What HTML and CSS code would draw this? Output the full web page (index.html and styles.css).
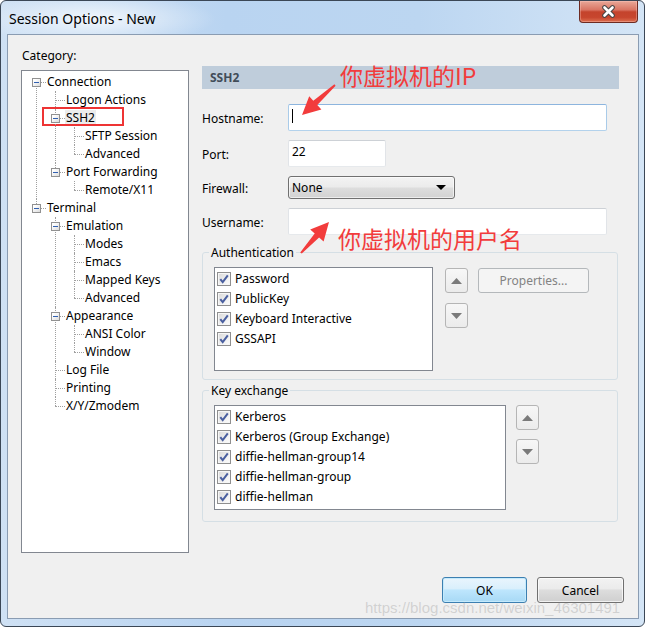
FILE: index.html
```html
<!DOCTYPE html>
<html>
<head>
<meta charset="utf-8">
<title>Session Options - New</title>
<link rel="stylesheet" href="styles.css">
</head>
<body>
<div class="window">
  <div class="titlebar">
    <span class="title">Session Options - New</span>
    <div class="close">
      <svg width="15" height="13" viewBox="0 0 15 13"><path d="M3.5 2.5 L11.5 10.5 M11.5 2.5 L3.5 10.5" stroke="#454545" stroke-width="4.6" stroke-linecap="round"/><path d="M3.5 2.5 L11.5 10.5 M11.5 2.5 L3.5 10.5" stroke="#ffffff" stroke-width="2.6" stroke-linecap="round"/></svg>
    </div>
  </div>
  <div class="client">
    <div class="main">
      <div class="left">
        <div class="cat-label">Category:</div>
        <div class="tree">
          <ul class="tree-root">
            <li><div class="row"><span class="tog"></span><span class="lbl">Connection</span></div>
              <ul>
                <li><div class="row"><span class="leaf"></span><span class="lbl">Logon Actions</span></div></li>
                <li><div class="row"><span class="tog"></span><span class="lbl sel">SSH2</span><span class="mark"></span></div>
                  <ul>
                    <li><div class="row"><span class="leaf"></span><span class="lbl">SFTP Session</span></div></li>
                    <li><div class="row"><span class="leaf"></span><span class="lbl">Advanced</span></div></li>
                  </ul>
                </li>
                <li><div class="row"><span class="tog"></span><span class="lbl">Port Forwarding</span></div>
                  <ul>
                    <li><div class="row"><span class="leaf"></span><span class="lbl">Remote/X11</span></div></li>
                  </ul>
                </li>
              </ul>
            </li>
            <li><div class="row"><span class="tog"></span><span class="lbl">Terminal</span></div>
              <ul>
                <li><div class="row"><span class="tog"></span><span class="lbl">Emulation</span></div>
                  <ul>
                    <li><div class="row"><span class="leaf"></span><span class="lbl">Modes</span></div></li>
                    <li><div class="row"><span class="leaf"></span><span class="lbl">Emacs</span></div></li>
                    <li><div class="row"><span class="leaf"></span><span class="lbl">Mapped Keys</span></div></li>
                    <li><div class="row"><span class="leaf"></span><span class="lbl">Advanced</span></div></li>
                  </ul>
                </li>
                <li><div class="row"><span class="tog"></span><span class="lbl">Appearance</span></div>
                  <ul>
                    <li><div class="row"><span class="leaf"></span><span class="lbl">ANSI Color</span></div></li>
                    <li><div class="row"><span class="leaf"></span><span class="lbl">Window</span></div></li>
                  </ul>
                </li>
                <li><div class="row"><span class="leaf"></span><span class="lbl">Log File</span></div></li>
                <li><div class="row"><span class="leaf"></span><span class="lbl">Printing</span></div></li>
                <li><div class="row"><span class="leaf"></span><span class="lbl">X/Y/Zmodem</span></div></li>
              </ul>
            </li>
          </ul>
        </div>
      </div>
      <div class="right">
        <div class="header">SSH2</div>
        <div class="form">
          <span class="flabel">Hostname:</span>
          <div class="tb tb-wide focus"><span class="caret"></span></div>
          <span class="flabel">Port:</span>
          <div class="tb tb-port">22</div>
          <span class="flabel">Firewall:</span>
          <div class="select"><span>None</span><svg width="10" height="5" viewBox="0 0 10 5"><polygon points="0,0 10,0 5,5" fill="#000"/></svg></div>
          <span class="flabel">Username:</span>
          <div class="tb tb-wide"></div>
        </div>
        <fieldset class="group group-auth">
          <legend>Authentication</legend>
          <div class="group-body">
            <div class="list list-auth">
              <div class="item"><span class="chk"><svg width="12" height="12" viewBox="0 0 12 12"><path d="M2.3 6.2 L4.7 9.2 L9.8 2.4" fill="none" stroke="#4a5f9f" stroke-width="2"/></svg></span>Password</div>
              <div class="item"><span class="chk"><svg width="12" height="12" viewBox="0 0 12 12"><path d="M2.3 6.2 L4.7 9.2 L9.8 2.4" fill="none" stroke="#4a5f9f" stroke-width="2"/></svg></span>PublicKey</div>
              <div class="item"><span class="chk"><svg width="12" height="12" viewBox="0 0 12 12"><path d="M2.3 6.2 L4.7 9.2 L9.8 2.4" fill="none" stroke="#4a5f9f" stroke-width="2"/></svg></span>Keyboard Interactive</div>
              <div class="item"><span class="chk"><svg width="12" height="12" viewBox="0 0 12 12"><path d="M2.3 6.2 L4.7 9.2 L9.8 2.4" fill="none" stroke="#4a5f9f" stroke-width="2"/></svg></span>GSSAPI</div>
            </div>
            <div class="arrow-col">
              <div class="arr"><svg width="11" height="6" viewBox="0 0 11 6"><polygon points="0,6 5.5,0 11,6" fill="#7a7a7a"/></svg></div>
              <div class="arr"><svg width="11" height="6" viewBox="0 0 11 6"><polygon points="0,0 11,0 5.5,6" fill="#7a7a7a"/></svg></div>
            </div>
            <div class="btn disabled props">Properties...</div>
          </div>
        </fieldset>
        <fieldset class="group group-kex">
          <legend>Key exchange</legend>
          <div class="group-body">
            <div class="list list-kex">
              <div class="item"><span class="chk"><svg width="12" height="12" viewBox="0 0 12 12"><path d="M2.3 6.2 L4.7 9.2 L9.8 2.4" fill="none" stroke="#4a5f9f" stroke-width="2"/></svg></span>Kerberos</div>
              <div class="item"><span class="chk"><svg width="12" height="12" viewBox="0 0 12 12"><path d="M2.3 6.2 L4.7 9.2 L9.8 2.4" fill="none" stroke="#4a5f9f" stroke-width="2"/></svg></span>Kerberos (Group Exchange)</div>
              <div class="item"><span class="chk"><svg width="12" height="12" viewBox="0 0 12 12"><path d="M2.3 6.2 L4.7 9.2 L9.8 2.4" fill="none" stroke="#4a5f9f" stroke-width="2"/></svg></span>diffie-hellman-group14</div>
              <div class="item"><span class="chk"><svg width="12" height="12" viewBox="0 0 12 12"><path d="M2.3 6.2 L4.7 9.2 L9.8 2.4" fill="none" stroke="#4a5f9f" stroke-width="2"/></svg></span>diffie-hellman-group</div>
              <div class="item"><span class="chk"><svg width="12" height="12" viewBox="0 0 12 12"><path d="M2.3 6.2 L4.7 9.2 L9.8 2.4" fill="none" stroke="#4a5f9f" stroke-width="2"/></svg></span>diffie-hellman</div>
            </div>
            <div class="arrow-col kex-arrows">
              <div class="arr"><svg width="11" height="6" viewBox="0 0 11 6"><polygon points="0,6 5.5,0 11,6" fill="#7a7a7a"/></svg></div>
              <div class="arr"><svg width="11" height="6" viewBox="0 0 11 6"><polygon points="0,0 11,0 5.5,6" fill="#7a7a7a"/></svg></div>
            </div>
          </div>
        </fieldset>
      </div>
    </div>
    <div class="footer">
      <div class="btn ok">OK</div>
      <div class="btn cancel">Cancel</div>
    </div>
  </div>
  <div class="watermark">https://blog.csdn.net/weixin_46301491</div>
  <div class="note note-ip">你虚拟机的IP</div>
  <div class="note note-user">你虚拟机的用户名</div>
  <svg class="arrows" width="645" height="627" viewBox="0 0 645 627">
    <polygon points="335.6,85.8 317.3,105.1 321.4,109.6 302,115 309.2,96.2 313.3,100.7 334.4,84.3" fill="#f23c3c"/>
    <polygon points="301.8,253.6 319.1,237.4 323.6,241.4 329,222 310.2,229.4 314.7,233.4 300.2,252.4" fill="#f23c3c"/>
  </svg>
</div>
</body>
</html>
```
FILE: styles.css
```css
body {
  margin: 0;
  font-family: "Noto Sans", "Liberation Sans", sans-serif;
  font-size: 12px;
  line-height: 16px;
  color: #000;
  background: #fff;
}

.window {
  position: relative;
  width: 645px;
  height: 627px;
  box-sizing: border-box;
  border: 1px solid #3b4756;
  border-radius: 6px;
  padding: 0 5px 7px 6px;
  display: flex;
  flex-direction: column;
  overflow: hidden;
  background:
    radial-gradient(ellipse 120px 26px at 95px 18px, rgba(255,255,255,0.75), rgba(255,255,255,0)),
    linear-gradient(90deg, #cfe1f4 0%, #b9d4f1 35%, #bcd6f1 65%, #d4e5f6 100%);
}

.titlebar {
  height: 33px;
  display: flex;
  align-items: center;
  justify-content: space-between;
  flex-shrink: 0;
}

.title {
  font-size: 14px;
  margin-left: 2px;
  margin-top: 3px;
}

.close {
  align-self: flex-start;
  margin-right: 1px;
  width: 59px;
  height: 22px;
  box-sizing: border-box;
  border: 1px solid #6d2b22;
  border-top: none;
  border-radius: 0 0 4px 4px;
  background: linear-gradient(#e9a898 0%, #d97563 42%, #c4432c 52%, #c7462e 78%, #dc6f50 100%);
  box-shadow: inset 0 0 0 1px rgba(255, 210, 200, 0.35);
  display: flex;
  align-items: center;
  justify-content: center;
}

.client {
  height: 585px;
  box-sizing: border-box;
  border: 1px solid #8a9cb2;
  background: #f0f0f0;
  padding: 13px 0 0 13px;
  display: flex;
  flex-direction: column;
}

.main {
  display: flex;
  gap: 13px;
}

.left {
  width: 168px;
}

.cat-label {
  padding-left: 1px;
  margin-bottom: 6px;
}

/* tree */
.tree {
  width: 168px;
  height: 483px;
  box-sizing: border-box;
  border: 1px solid #828790;
  background: #fff;
  padding-top: 2px;
}

.tree ul {
  list-style: none;
  margin: 0;
  padding: 0;
}

.tree .tree-root {
  padding-left: 10px;
}

.tree li {
  position: relative;
  padding-left: 14px;
}

.tree li ul {
  margin-left: 5px;
}

.tree li::before {
  content: "";
  position: absolute;
  left: 4px;
  top: 9px;
  width: 10px;
  border-top: 1px dotted #a0a0a0;
}

.tree li::after {
  content: "";
  position: absolute;
  left: 4px;
  top: 0;
  bottom: 0;
  border-left: 1px dotted #a0a0a0;
}

.tree li:last-child::after {
  bottom: auto;
  height: 9px;
}

.tree .tree-root > li:first-child::after {
  top: 9px;
}

.row {
  position: relative;
  display: flex;
  align-items: center;
  height: 18px;
  margin-left: -14px;
}

.tog {
  position: relative;
  z-index: 1;
  width: 9px;
  height: 9px;
  box-sizing: border-box;
  border: 1px solid #919191;
  background: linear-gradient(135deg, #ffffff 20%, #dcdcdc 100%);
  margin-right: 5px;
  display: flex;
  align-items: center;
  justify-content: center;
}

.tog::after {
  content: "";
  width: 5px;
  height: 1px;
  background: #3160b0;
}

.leaf {
  width: 9px;
  margin-right: 5px;
}

.lbl {
  padding: 0 1px;
  line-height: 16px;
  white-space: nowrap;
}

.lbl.sel {
  background: #ececec;
}

.mark {
  position: absolute;
  left: -9px;
  top: -2px;
  width: 82px;
  height: 19px;
  box-sizing: border-box;
  border: 2px solid #ee3434;
}

/* right */
.right {
  width: 417px;
  margin-top: 18px;
}

.header {
  height: 23px;
  line-height: 23px;
  background: #bfcddb;
  padding-left: 8px;
  font-weight: bold;
  color: #414c58;
}

.form {
  display: grid;
  grid-template-columns: 86px auto;
  row-gap: 9px;
  align-items: center;
  justify-items: start;
  margin-top: 15px;
}

.flabel {
  padding-top: 2px;
}

.tb {
  box-sizing: border-box;
  height: 27px;
  border: 1px solid;
  border-color: #cdd1d6 #e1e4e8 #e6e9ec #e1e4e8;
  border-radius: 2px;
  background: #fff;
  padding: 3px 0 0 3px;
}

.tb-wide {
  width: 319px;
}

.tb-port {
  width: 98px;
}

.tb.focus {
  border-color: #8db5de #a9cbe9 #b3d2ec #a9cbe9;
}

.caret {
  display: block;
  width: 1px;
  height: 14px;
  background: #000;
  margin-top: 1px;
}

.select {
  box-sizing: border-box;
  width: 167px;
  height: 23px;
  border: 1px solid #707070;
  border-radius: 3px;
  background: linear-gradient(#f3f3f3 0%, #ebebeb 48%, #dddddd 52%, #d2d2d2 100%);
  box-shadow: inset 0 0 0 1px rgba(255, 255, 255, 0.6);
  display: flex;
  align-items: center;
  justify-content: space-between;
  padding: 0 8px 0 3px;
}

.group {
  box-sizing: border-box;
  width: 416px;
  min-width: 0;
  margin: 9px 0 0;
  padding: 0 8px 8px 6px;
  border: 1px solid #d5dfe5;
  border-radius: 3px;
}

.group legend {
  padding: 1px 2px 0;
  line-height: 16px;
}

.group-kex {
  margin-top: 2px;
  padding-bottom: 11px;
}

.group-body {
  display: flex;
  align-items: flex-start;
  margin-top: 6px;
  padding-left: 5px;
}

.list {
  box-sizing: border-box;
  border: 1px solid #828790;
  background: #fff;
  padding: 1px 0 0 2px;
}

.list-auth {
  width: 219px;
  height: 104px;
}

.list-kex {
  width: 292px;
  height: 105px;
}

.item {
  display: flex;
  align-items: center;
  gap: 4px;
  height: 20px;
  white-space: nowrap;
}

.chk {
  width: 14px;
  height: 14px;
  box-sizing: border-box;
  border: 1px solid #8f8f8f;
  background: linear-gradient(135deg, #d8d8d8 0%, #f0f0f0 60%, #fdfdfd 100%);
  box-shadow: inset 0 0 0 1px #f6f6f6;
  display: flex;
  align-items: center;
  justify-content: center;
}

.arrow-col {
  display: flex;
  flex-direction: column;
  gap: 10px;
  margin: 1px 0 0 12px;
}

.kex-arrows {
  margin: 0 0 0 10px;
  gap: 9px;
}

.arr {
  box-sizing: border-box;
  width: 23px;
  height: 25px;
  border: 1px solid #b5b5b5;
  border-radius: 3px;
  background: linear-gradient(#f7f7f7, #ebebeb);
  display: flex;
  align-items: center;
  justify-content: center;
}

.btn {
  box-sizing: border-box;
  height: 26px;
  border: 1px solid #707070;
  border-radius: 3px;
  background: linear-gradient(#f2f2f2 0%, #ebebeb 45%, #dddddd 50%, #cfcfcf 100%);
  box-shadow: inset 0 0 0 1px rgba(255, 255, 255, 0.7);
  display: flex;
  align-items: center;
  justify-content: center;
  padding-top: 1px;
}

.btn.disabled {
  width: 111px;
  height: 25px;
  margin: 1px 0 0 10px;
  border-color: #b4b8bb;
  background: #f4f4f4;
  box-shadow: none;
  color: #838383;
}

.footer {
  display: flex;
  justify-content: flex-end;
  gap: 10px;
  margin-top: 24px;
  padding-right: 14px;
}

.btn.ok {
  width: 85px;
  border-color: #3c7fb1;
  background: linear-gradient(#e9f5fd 0%, #d9effc 45%, #bee6fd 50%, #a7d9f5 100%);
  box-shadow: inset 0 0 0 1px #c4eafc;
}

.btn.cancel {
  width: 87px;
}

.watermark {
  position: absolute;
  left: 364px;
  top: 599px;
  font-family: "Liberation Sans", sans-serif;
  font-size: 15px;
  line-height: 16px;
  color: rgba(150, 150, 150, 0.35);
  white-space: nowrap;
}

.note {
  position: absolute;
  font-family: "Noto Sans CJK SC", "Noto Sans", sans-serif;
  font-size: 23px;
  line-height: 26px;
  color: #f23c3c;
  white-space: nowrap;
}

.note-ip {
  left: 339px;
  top: 61px;
}

.note-user {
  left: 337px;
  top: 224px;
}

.arrows {
  position: absolute;
  left: -1px;
  top: -1px;
  pointer-events: none;
}
```
